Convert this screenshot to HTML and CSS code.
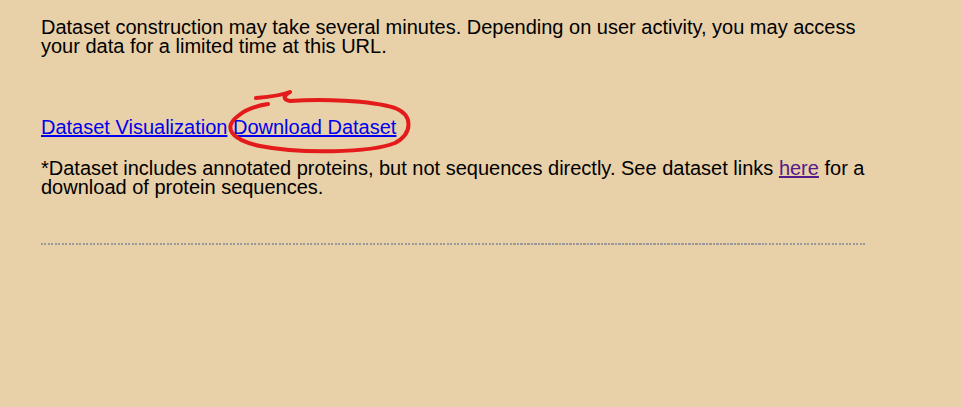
FILE: index.html
```html
<!DOCTYPE html>
<html>
<head>
<meta charset="utf-8">
<link rel="stylesheet" href="styles.css">
</head>
<body>
<div class="page">
  <div class="content">
    <p class="intro">Dataset construction may take several minutes. Depending on user activity, you may access your data for a limited time at this URL.</p>
    <p class="links"><a href="#">Dataset Visualization</a> <a href="#">Download Dataset</a></p>
    <p class="note">*Dataset includes annotated proteins, but not sequences directly. See dataset links <a class="visited" href="#">here</a> for a download of protein sequences.</p>
    <div class="rule"></div>
  </div>
  <svg class="scribble" width="962" height="407" viewBox="0 0 962 407">
    <path d="M256 98 C268 97 280 96 290 92 C285 95 281 99 290 101 C320 99 370 100 395 108 C413 115 413 133 395 143 C370 153 300 154 260 146 C232 140 222 128 238 116 C245 110 255 106 268 104" fill="none" stroke="#e31b1b" stroke-width="4" stroke-linecap="round" stroke-linejoin="round"/>
  </svg>
</div>
</body>
</html>
```
FILE: styles.css
```css
html, body {
  margin: 0;
  padding: 0;
  background: #e8d0a8;
}
.page {
  position: relative;
  width: 962px;
  height: 407px;
  overflow: hidden;
}
.content {
  width: 826px;
  padding: 17.5px 0 0 41px;
  font-family: "Liberation Sans", Arial, sans-serif;
  font-size: 20px;
  line-height: 19px;
  color: #000;
}
.content p {
  margin: 0;
}
.links {
  padding-top: 62px;
}
.links a {
  color: #0000ee;
  text-decoration: underline;
}
.note {
  padding-top: 22px;
}
.note a.visited {
  color: #551a8b;
}
.rule {
  margin-top: 46.5px;
  height: 2px;
  background: repeating-linear-gradient(90deg, #9a9a9a 0 2px, transparent 2px 3.5px);
}
.scribble {
  position: absolute;
  left: 0;
  top: 0;
  pointer-events: none;
}
```
